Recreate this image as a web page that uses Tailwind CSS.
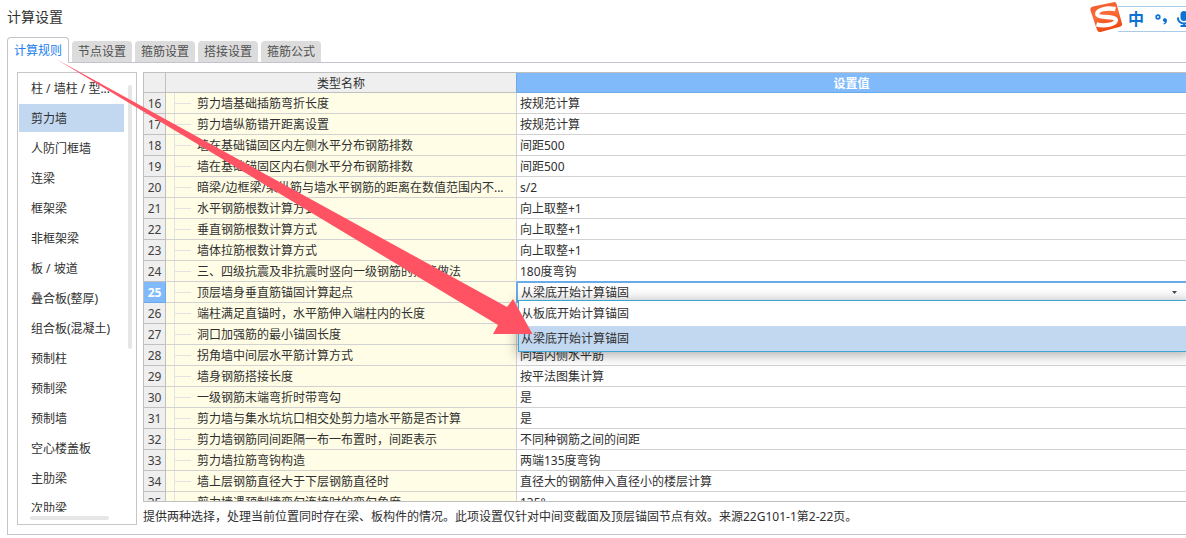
<!DOCTYPE html>
<html lang="zh-CN">
<head>
<meta charset="utf-8">
<meta name="viewport" content="width=device-width, initial-scale=1">
<title>计算设置</title>
<script src="https://cdn.jsdelivr.net/npm/@tailwindcss/browser@4"></script>
</head>
<body class="relative flex h-screen flex-col overflow-hidden bg-white font-['Noto_Sans','Noto_Sans_CJK_SC',sans-serif] text-xs text-[#303030]">
  <h1 class="mt-[7px] ml-[7px] text-sm leading-5">计算设置</h1>

  <nav class="z-10 mt-[10px] ml-[7px] flex items-end gap-[3px]" role="tablist">
    <button role="tab" aria-selected="true" class="-mb-px h-[26px] w-[62px] rounded-t-[4px] border border-b-0 border-[#c3c3cb] bg-white text-center leading-6 text-[#2080ee]">计算规则</button>
    <button role="tab" aria-selected="false" class="h-[21px] w-[60px] rounded-t-[4px] bg-[#dcdcdc] text-center leading-5 text-[#505050]">节点设置</button>
    <button role="tab" aria-selected="false" class="h-[21px] w-[60px] rounded-t-[4px] bg-[#dcdcdc] text-center leading-5 text-[#505050]">箍筋设置</button>
    <button role="tab" aria-selected="false" class="h-[21px] w-[60px] rounded-t-[4px] bg-[#dcdcdc] text-center leading-5 text-[#505050]">搭接设置</button>
    <button role="tab" aria-selected="false" class="h-[21px] w-[60px] rounded-t-[4px] bg-[#dcdcdc] text-center leading-5 text-[#505050]">箍筋公式</button>
  </nav>

  <main class="mb-[3px] ml-[7px] flex min-h-0 flex-1 gap-1.5 border border-r-0 border-[#c3c3cb] pt-[9px] pb-[9px] pl-[9px]">
    <aside class="flex w-[120px] shrink-0 flex-col border border-[#c6c6c6] p-px">
      <div class="flex min-h-0 flex-1 overflow-hidden">
        <ul id="types" class="flex w-[105px] flex-col gap-0.5"></ul>
        <div class="mt-[11px] ml-1 h-[264px] w-1 rounded-full bg-[#e6e6e6]"></div>
      </div>
      <div class="mt-1 mb-[3px] ml-[11px] h-1 w-[79px] rounded-full bg-[#e6e6e6]"></div>
    </aside>

    <section class="flex min-w-0 flex-1 flex-col">
      <div class="mb-1 min-h-0 flex-1 overflow-hidden border border-r-0 border-[#c0c0c0]">
        <table class="w-full table-fixed border-separate border-spacing-0">
          <colgroup><col class="w-[22px]"><col class="w-[351px]"><col></colgroup>
          <thead>
            <tr class="h-5">
              <th class="border-r border-b border-[#c0c0c0] bg-[#efefef] p-0"></th>
              <th class="border-r border-b border-r-[#6aaae8] border-b-[#c0c0c0] bg-[#efefef] p-0 pt-0.5 leading-4 font-normal">类型名称</th>
              <th class="border-b border-[#6aaae8] bg-[#80bafb] p-0 pt-0.5 leading-4 font-bold text-white">设置值</th>
            </tr>
          </thead>
          <tbody id="rules"></tbody>
        </table>
      </div>
      <p class="truncate pt-0.5 leading-[17px]">提供两种选择，处理当前位置同时存在梁、板构件的情况。此项设置仅针对中间变截面及顶层锚固节点有效。来源22G101-1第2-22页。</p>
    </section>
  </main>

  <!-- Annotation arrow -->
  <svg class="pointer-events-none absolute top-0 left-0 z-30 h-[340px] w-[540px]" viewBox="0 0 540 340" aria-hidden="true">
    <path d="M56 59 L507 307 L513 299 L532.5 334 L493 334 L498 325 Z" fill="#ff5364"/>
  </svg>

  <!-- Input method bar -->
  <div class="absolute top-0 right-0 z-20 h-9 w-24">
    <div class="absolute top-1.5 right-0 flex h-[26px] w-[68px] items-center border-y border-[#a9cbea] bg-white pl-2.5 text-[#0b72d8]">
      <span class="text-base leading-6 font-bold">中</span>
      <svg class="ml-2.5 h-4 w-4 shrink-0" viewBox="0 0 16 16" aria-hidden="true">
        <circle cx="4" cy="6" r="1.800" fill="none" stroke="currentColor" stroke-width="1.700"/>
        <path d="M8.800 9.200a2.100 2.100 0 0 1 4-.7c.7 2.300-.9 4.600-2.800 5.100l-.6-1c.9-.4 1.400-1 1.500-1.700A2 2 0 0 1 8.800 9.200Z" fill="currentColor"/>
      </svg>
      <svg class="ml-1.5 h-4 w-4 shrink-0" viewBox="0 0 16 16" aria-hidden="true">
        <rect x="4.500" y="0" width="7" height="10" rx="3.500" fill="currentColor"/>
        <path d="M2 6.500v1a6 5 0 0 0 12 0v-1M8 12.500V15M4.500 15h7" fill="none" stroke="currentColor" stroke-width="2"/>
      </svg>
    </div>
    <svg class="absolute top-0.5 left-0 h-8 w-8" viewBox="0 0 32 32" aria-hidden="true">
      <defs><linearGradient id="logo" x1="0" y1="0" x2="0.300" y2="1"><stop offset="0" stop-color="#ef5a2c"/><stop offset=".5" stop-color="#fb6b38"/><stop offset="1" stop-color="#ee4a12"/></linearGradient></defs>
      <path d="M3 4.500 23.500.2q2.500-.5 3.200 2L32 21.500q.6 2.500-2 3.200L10.500 30q-2.700.6-3.400-2L.3 8Q-.1 5.200 3 4.500Z" fill="url(#logo)"/>
      <path d="M25.500 7.200C17 5.400 7 7.500 7.200 12c.2 4.500 18.200 1.500 18.700 6 .3 4.500-11 6.600-19.400 4.400" fill="none" stroke="#fff" stroke-width="4.300"/>
    </svg>
  </div>

  <template id="rule-row">
    <tr class="h-[21px]">
      <th scope="row" class="border-r border-b border-[#c0c0c0] bg-[#efefef] p-0 pt-0.5 text-center leading-[18px] font-normal text-[#404040]"></th>
      <td class="border-r border-b border-[#d2d2d2] bg-[#fffde6] p-0">
        <div class="flex h-5 items-center">
          <span class="ml-2 flex h-5 w-[17px] shrink-0 items-center border-l border-[#e2e2e2]"><span class="h-px w-4 bg-[#e2e2e2]"></span></span>
          <span data-name class="ml-1.5 pt-0.5 leading-[18px] whitespace-nowrap"></span>
        </div>
      </td>
      <td class="border-b border-[#d2d2d2] bg-white p-0 pt-0.5 pl-[3px] leading-[18px] whitespace-nowrap"></td>
    </tr>
  </template>

  <template id="editor">
    <div class="relative h-5 border-t border-l border-[#6aaae8]">
      <select aria-label="顶层墙身垂直筋锚固计算起点" class="block h-[19px] w-full appearance-none bg-white pl-[3px] leading-[19px] outline-none">
        <option>从梁底开始计算锚固</option>
        <option>从板底开始计算锚固</option>
      </select>
      <svg class="pointer-events-none absolute top-2 right-[9px] h-[3px] w-[5px]" viewBox="0 0 5 3" aria-hidden="true"><path d="M0 0h5L2.500 3Z" fill="#404858"/></svg>
      <ul role="listbox" class="absolute top-[17px] -right-1 left-0 z-10 border border-[#3ca5d2] bg-white shadow-[0_2px_12px_1px_rgba(0,0,0,0.33)]">
        <li role="option" aria-selected="false" class="h-[25px] pl-0.5 leading-[25px]">从板底开始计算锚固</li>
        <li role="option" aria-selected="true" class="h-[25px] bg-[#c2d8f0] pl-0.5 leading-[25px]">从梁底开始计算锚固</li>
      </ul>
    </div>
  </template>

  <script>
    const types = ['柱 / 墙柱 / 型...', '剪力墙', '人防门框墙', '连梁', '框架梁', '非框架梁', '板 / 坡道', '叠合板(整厚)', '组合板(混凝土)', '预制柱', '预制梁', '预制墙', '空心楼盖板', '主肋梁', '次肋梁'];
    const list = document.getElementById('types');
    types.forEach((name, i) => {
      const li = document.createElement('li');
      li.className = 'shrink-0';
      const b = document.createElement('button');
      b.className = 'block h-7 w-full pl-3 text-left leading-[30px] whitespace-nowrap';
      if (i === 1) b.classList.add('bg-[#c2d8f0]');
      b.textContent = name;
      li.append(b);
      list.append(li);
    });

    const rules = [
      ['剪力墙基础插筋弯折长度', '按规范计算'],
      ['剪力墙纵筋错开距离设置', '按规范计算'],
      ['墙在基础锚固区内左侧水平分布钢筋排数', '间距500'],
      ['墙在基础锚固区内右侧水平分布钢筋排数', '间距500'],
      ['暗梁/边框梁/梁纵筋与墙水平钢筋的距离在数值范围内不...', 's/2'],
      ['水平钢筋根数计算方式', '向上取整+1'],
      ['垂直钢筋根数计算方式', '向上取整+1'],
      ['墙体拉筋根数计算方式', '向上取整+1'],
      ['三、四级抗震及非抗震时竖向一级钢筋的搭接做法', '180度弯钩'],
      ['顶层墙身垂直筋锚固计算起点', null],
      ['端柱满足直锚时，水平筋伸入端柱内的长度', ''],
      ['洞口加强筋的最小锚固长度', ''],
      ['拐角墙中间层水平筋计算方式', '同墙内侧水平筋'],
      ['墙身钢筋搭接长度', '按平法图集计算'],
      ['一级钢筋末端弯折时带弯勾', '是'],
      ['剪力墙与集水坑坑口相交处剪力墙水平筋是否计算', '是'],
      ['剪力墙钢筋同间距隔一布一布置时，间距表示', '不同种钢筋之间的间距'],
      ['剪力墙拉筋弯钩构造', '两端135度弯钩'],
      ['墙上层钢筋直径大于下层钢筋直径时', '直径大的钢筋伸入直径小的楼层计算'],
      ['剪力墙遇预制墙弯勾连接时的弯勾角度', '135°']
    ];
    const body = document.getElementById('rules');
    rules.forEach(([name, value], i) => {
      const row = document.getElementById('rule-row').content.cloneNode(true);
      const [head, label, cell] = row.querySelector('tr').children;
      head.textContent = i + 16;
      label.querySelector('[data-name]').textContent = name;
      if (value === null) {
        head.className = 'border-r border-b border-[#6aaae8] bg-[#80bafb] p-0 pt-0.5 text-center leading-[18px] font-bold text-white';
        label.classList.add('border-r-[#6aaae8]');
        cell.className = 'border-b border-[#6aaae8] p-0';
        cell.append(document.getElementById('editor').content.cloneNode(true));
      } else {
        cell.textContent = value;
        if (rules[i + 1] && rules[i + 1][1] === null) cell.classList.add('border-b-[#6aaae8]');
      }
      body.append(row);
    });
  </script>
</body>
</html>
